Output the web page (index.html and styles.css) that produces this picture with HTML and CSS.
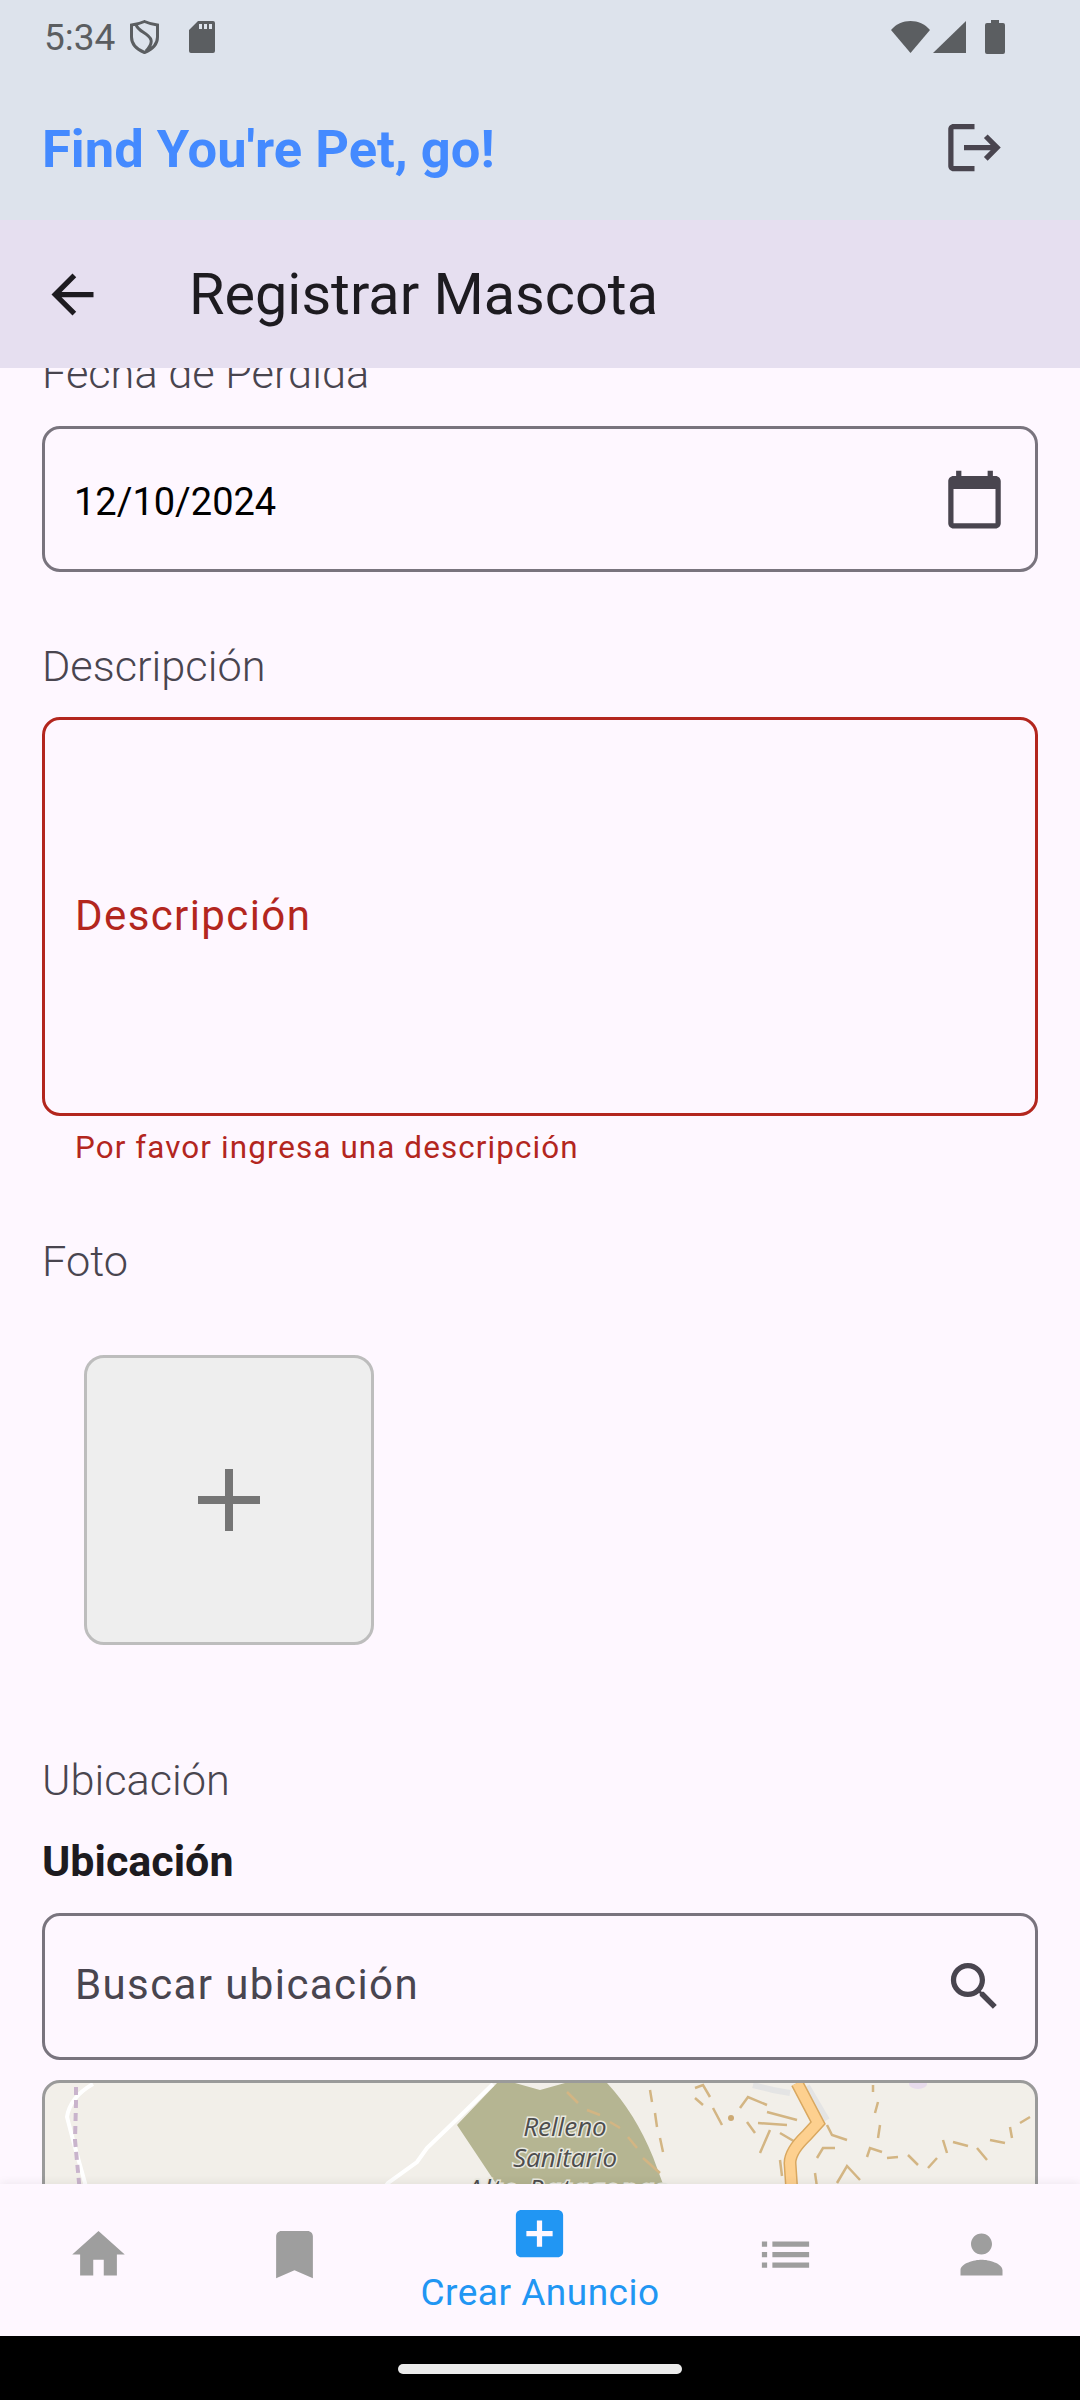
FILE: index.html
```html
<!DOCTYPE html>
<html lang="es">
<head>
  <meta charset="UTF-8" />
  <meta name="viewport" content="width=device-width, initial-scale=1.0" />
  <title>Registrar Mascota</title>
  <link rel="stylesheet" href="styles.css">
</head>
<body>
  <div class="top">
    <div class="status-bar">
      <div class="status-left">
        <span class="time">5:34</span>
        <svg class="shield" viewBox="0 0 29 34"><path d="M14.5 1.5 C19 3.5 23 4.5 27.5 5 V17 C27.5 24 22 29.5 14.5 32.5 C7 29.5 1.500 24 1.500 17 V5 C6 4.500 10 3.500 14.500 1.500 Z M6 4.500 C8 12 19 13 21 20 C22 24 19 28 16 31" fill="none" stroke="#5b5e61" stroke-width="3"/></svg>
        <svg class="sdcard" viewBox="0 0 26 32"><path d="M9 0 H24 a2 2 0 0 1 2 2 V30 a2 2 0 0 1 -2 2 H2 a2 2 0 0 1 -2 -2 V9 Z M10 3 V8 H13 V3 Z M15 3 V8 H18 V3 Z M20 3 V8 H23 V3 Z" fill="#5b5e61" fill-rule="evenodd"/></svg>
      </div>
      <div class="status-right">
        <svg class="wifi" viewBox="0 0 39 32"><path d="M0 9 C5 3 12 0 19.500 0 C27 0 34 3 39 9 L19.500 32 Z" fill="#5b5e61"/></svg>
        <svg class="signal" viewBox="0 0 33 32"><path d="M33 0 V32 H0 Z" fill="#5b5e61"/></svg>
        <svg class="battery" viewBox="0 0 20 34"><path d="M6 0 H14 V3 H18 a2 2 0 0 1 2 2 V32 a2 2 0 0 1 -2 2 H2 a2 2 0 0 1 -2 -2 V5 a2 2 0 0 1 2 -2 H6 Z" fill="#5b5e61"/></svg>
      </div>
    </div>
    <div class="app-bar">
      <span class="app-title">Find You're Pet, go!</span>
      <svg class="icon icon-dark" viewBox="0 0 24 24"><path d="M17 7l-1.410 1.410L18.170 11H8v2h10.170l-2.580 2.580L17 17l5-5zM4 5h8V3H4c-1.100 0-2 .9-2 2v14c0 1.100.9 2 2 2h8v-2H4V5z"/></svg>
    </div>
  </div>

  <div class="page-bar">
    <svg class="icon icon-black" viewBox="0 0 24 24"><path d="M20 11H7.830l5.590-5.590L12 4l-8 8 8 8 1.410-1.410L7.830 13H20v-2z"/></svg>
    <span class="page-title">Registrar Mascota</span>
  </div>

  <main class="content">
    <div class="form">
      <div class="label label-first">Fecha de Perdida</div>
      <div class="input input-date">
        <span class="date-value">12/10/2024</span>
        <svg class="icon icon-dark" viewBox="0 0 24 24"><path d="M20 3h-1V1h-2v2H7V1H5v2H4c-1.100 0-2 .9-2 2v16c0 1.100.9 2 2 2h16c1.100 0 2-.9 2-2V5c0-1.100-.9-2-2-2zm0 18H4V8h16v13z"/></svg>
      </div>

      <div class="label">Descripción</div>
      <div class="input input-error">Descripción</div>
      <div class="error-text">Por favor ingresa una descripción</div>

      <div class="label">Foto</div>
      <div class="photo-box">
        <svg class="plus" viewBox="0 0 62 62"><path d="M27 0 H35 V27 H62 V35 H35 V62 H27 V35 H0 V27 H27 Z"/></svg>
      </div>

      <div class="label label-location">Ubicación</div>
      <div class="subtitle">Ubicación</div>
      <div class="input input-search">
        <span class="search-text">Buscar ubicación</span>
        <svg class="icon icon-dark" viewBox="0 0 24 24"><path d="M15.500 14h-.79l-.28-.27C15.410 12.590 16 11.110 16 9.500 16 5.910 13.090 3 9.500 3S3 5.910 3 9.500 5.910 16 9.500 16c1.610 0 3.090-.59 4.230-1.570l.27.28v.79l5 4.990L20.490 19l-4.990-5zm-6 0C7.010 14 5 11.990 5 9.500S7.010 5 9.500 5 14 7.010 14 9.500 11.990 14 9.500 14z"/></svg>
      </div>

      <div class="map">
        <svg class="map-svg" viewBox="0 0 990 200">
          <!-- map tile, roughly traced -->
          <ellipse class="spot" cx="873" cy="1" rx="9" ry="5"/>
          <path class="park" d="M452 0 L470 0 L495 7 L520 0 L562 0 Q590 30 608 74 L625 120 L470 120 L452 102 L412 42 Z"/>
          <path class="road-white" d="M448 1 L408 40 L382 65 L372 79 L343 100 L335 110"/>
          <path class="road-white" d="M48 1 Q25 14 22 34 L28 57 L40 100 L42 110"/>
          <path class="road-purple" d="M31 4 L31 20 L30 57 L35 110"/>
          <path class="contour" d="M522 9 L533 20 M542 27 L555 32 M565 39 L575 45 M583 54 L592 65 M598 75 L615 90 M605 7 L607 19 M610 30 L612 44 M615 55 L618 69 M650 5 L658 2 L665 14 M650 15 L658 22 M668 25 L677 42 M695 25 L703 14 L722 22 M722 29 L752 37 M702 39 L710 50 M713 40 L742 42 M725 47 L715 70 M735 50 L752 60 M735 77 L737 93"/>
          <path class="contour" d="M772 75 L778 65 L790 65 M770 90 L772 104 M782 42 L787 52 L802 57 M792 100 L802 83 L815 97 M822 74 L825 65 L837 69 M842 75 L853 74 M863 72 L873 82 M883 85 L892 75 M898 57 L902 70 M908 59 L923 63 M932 65 L942 77 M945 57 L960 60 M965 44 L967 55 M975 40 L985 34 M828 2 L828 9 M833 19 L830 30 M835 42 L833 55"/>
          <circle class="contour-dot" cx="686" cy="35" r="3"/>
          <path class="road-grey" d="M708 2 L728 7 L745 10 M762 3 L782 37"/>
          <path class="road-orange-edge" d="M752 0 L773 40 L762 52 Q745 68 745 80 L747 110"/>
          <path class="road-orange" d="M752 0 L773 40 L762 52 Q745 68 745 80 L747 110"/>
          <text class="map-text" x="520" y="53">Relleno</text>
          <text class="map-text" x="520" y="84">Sanitario</text>
          <text class="map-text map-text-wide" x="523" y="115">Alto Patagonas</text>
        </svg>
      </div>
    </div>
  </main>

  <nav class="bottom-nav">
    <div class="nav-item">
      <svg class="icon icon-grey" viewBox="0 0 24 24"><path d="M10 20v-6h4v6h5v-8h3L12 3 2 12h3v8z"/></svg>
    </div>
    <div class="nav-item">
      <svg class="icon icon-grey" viewBox="0 0 24 24"><path d="M17 3H7c-1.100 0-1.990.9-1.990 2L5 21l7-3 7 3V5c0-1.100-.9-2-2-2z"/></svg>
    </div>
    <div class="nav-item nav-active">
      <svg class="icon icon-blue" viewBox="0 0 24 24"><path d="M19 3H5c-1.110 0-2 .9-2 2v14c0 1.100.89 2 2 2h14c1.100 0 2-.9 2-2V5c0-1.100-.9-2-2-2zm-2 10h-4v4h-2v-4H7v-2h4V7h2v4h4v2z"/></svg>
      <span class="nav-label">Crear Anuncio</span>
    </div>
    <div class="nav-item">
      <svg class="icon icon-grey" viewBox="0 0 24 24"><path d="M3 13h2v-2H3v2zm0 4h2v-2H3v2zm0-8h2V7H3v2zm4 4h14v-2H7v2zm0 4h14v-2H7v2zM7 7v2h14V7H7z"/></svg>
    </div>
    <div class="nav-item">
      <svg class="icon icon-grey" viewBox="0 0 24 24"><path d="M12 12c2.210 0 4-1.790 4-4s-1.790-4-4-4-4 1.790-4 4 1.790 4 4 4zm0 2c-2.670 0-8 1.340-8 4v2h16v-2c0-2.660-5.330-4-8-4z"/></svg>
    </div>
  </nav>

  <div class="gesture-bar"><div class="gesture-pill"></div></div>
</body>
</html>
```

FILE: styles.css
```css
* { box-sizing: border-box; }
body { margin: 0; width: 1080px; height: 2400px; display: flex; flex-direction: column; overflow: hidden; font-family: Roboto, sans-serif; background: #fef7ff; }
svg { display: block; flex-shrink: 0; }

.icon { width: 63px; height: 63px; }
.icon-dark { fill: #49454f; }
.icon-black { fill: #1d1b20; }
.icon-grey { fill: #9e9e9e; }
.icon-blue { fill: #2196f3; }

.top { height: 220px; background: #dde3ec; flex-shrink: 0; }
.status-bar { height: 74px; padding: 0 75px 0 44px; display: flex; justify-content: space-between; align-items: center; }
.status-left { display: flex; align-items: center; }
.status-right { display: flex; align-items: center; }
.time { font-size: 37px; color: #5b5e61; width: 86px; }
.shield { width: 29px; height: 34px; }
.sdcard { width: 26px; height: 32px; margin-left: 30px; }
.wifi { width: 39px; height: 32px; }
.signal { width: 33px; height: 32px; margin-left: 3px; }
.battery { width: 20px; height: 34px; margin-left: 19px; }

.app-bar { height: 146px; padding: 4px 74px 0 42px; display: flex; justify-content: space-between; align-items: center; }
.app-bar .icon { margin-top: -4px; }
.app-title { font-size: 52.500px; font-weight: 700; color: #448aff; }

.page-bar { height: 148px; flex-shrink: 0; background: #e6dff0; display: flex; align-items: center; padding-left: 41px; }
.page-title { font-size: 57.600px; color: #1d1b20; margin-left: 85px; }

.content { flex: 1; overflow: hidden; min-height: 0; }
.form { padding: 0 42px; }
.label { height: 60px; line-height: 64px; margin-top: 63px; font-size: 43.300px; font-weight: 300; color: #49454f; }
.label-first { margin-top: -25px; line-height: 62px; }
.label-location { margin-top: 104px; }

.input { margin-top: 23px; border: 3px solid #79747e; border-radius: 18px; height: 146px; padding: 0 29px 0 30px; display: flex; align-items: center; justify-content: space-between; font-size: 42px; letter-spacing: 1.400px; color: #49454f; }
.date-value { font-size: 38px; letter-spacing: 0; color: #000; margin: 5px 0 0 -1px; }
.input-search { margin-top: 25px; height: 147px; }
.search-text { margin-bottom: 4px; }
.input-error { margin-top: 22px; height: 399px; padding-bottom: 2px; border-color: #b3261e; color: #b3261e; }
.error-text { height: 40px; line-height: 42px; margin-top: 11px; padding-left: 33px; font-size: 31.400px; letter-spacing: 1.100px; color: #b3261e; }

.photo-box { width: 290px; height: 290px; margin: 65px 0 0 42px; background: #eeeeee; border: 3px solid #bdbdbd; border-radius: 20px; display: flex; align-items: center; justify-content: center; }
.plus { width: 62px; height: 62px; fill: #757575; }

.subtitle { height: 56px; line-height: 58px; margin-top: 23px; font-size: 43px; font-weight: 700; color: #1d1b20; }

.map { margin-top: 20px; height: 200px; border: 3px solid #9a9a9a; border-radius: 18px; overflow: hidden; background: #f2efe9; }
.map-svg { width: 990px; height: 200px; }
.park { fill: #b5b592; }
.spot { fill: #e8dcec; }
.road-white { fill: none; stroke: #fff; stroke-width: 4; }
.road-grey { fill: none; stroke: #e4e4e4; stroke-width: 6; }
.road-purple { fill: none; stroke: #c9b4cc; stroke-width: 4; stroke-dasharray: 8 5; }
.contour { fill: none; stroke: #d3b583; stroke-width: 2.500; }
.contour-dot { fill: #cdaa74; }
.road-orange-edge { fill: none; stroke: #d9a860; stroke-width: 13; }
.road-orange { fill: none; stroke: #fdd08f; stroke-width: 10; }
.map-text { font-family: "Open Sans", sans-serif; font-style: italic; font-size: 26px; text-anchor: middle; fill: #4e4e4e; stroke: #e9e9e0; stroke-width: 3px; paint-order: stroke; }
.map-text-wide { letter-spacing: 2px; }

.bottom-nav { height: 152px; flex-shrink: 0; display: flex; background: #fef7ff; box-shadow: 0 -2px 8px rgba(0,0,0,0.06); position: relative; }
.nav-item { flex: 2; display: flex; flex-direction: column; align-items: center; justify-content: center; padding-bottom: 12px; }
.nav-active { flex: 3; justify-content: flex-start; padding: 18px 0 0; }
.nav-label { font-size: 37px; letter-spacing: 0.500px; color: #2196f3; margin-top: 6px; }

.gesture-bar { height: 64px; flex-shrink: 0; background: #000; display: flex; justify-content: center; padding-top: 28px; }
.gesture-pill { width: 284px; height: 10px; border-radius: 5px; background: #ebebeb; }
```
